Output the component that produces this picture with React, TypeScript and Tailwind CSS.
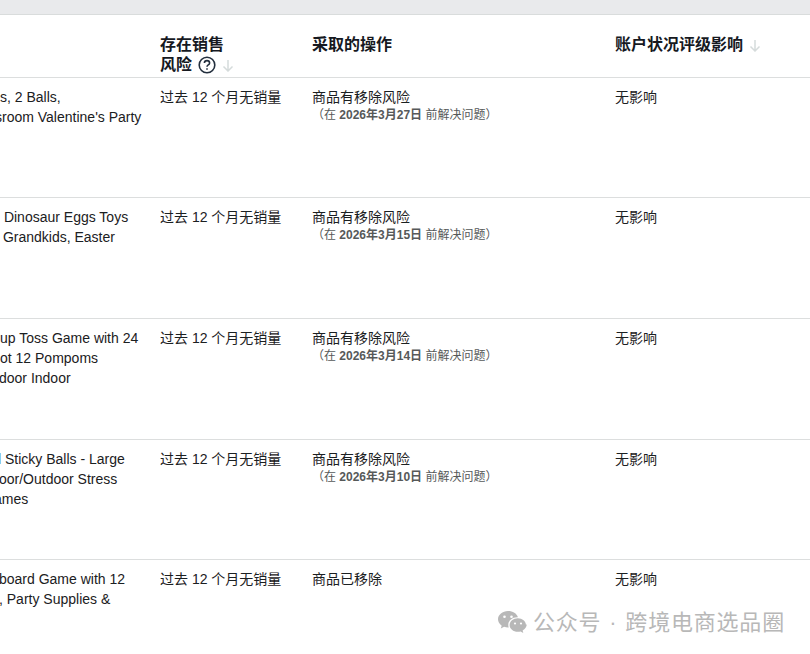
const rows = [
  {
    lines: [
      { text: "s, 2 Balls,", shift: "" },
      { text: "sroom Valentine's Party", shift: "-ml-[5px]" },
    ],
    action: "商品有移除风险",
    date: "2026年3月27日",
    h: "h-[120px]",
  },
  {
    lines: [
      { text: " Dinosaur Eggs Toys", shift: "" },
      { text: " Grandkids, Easter", shift: "-ml-[1px]" },
    ],
    action: "商品有移除风险",
    date: "2026年3月15日",
    h: "h-[121px]",
  },
  {
    lines: [
      { text: "up Toss Game with 24", shift: "" },
      { text: "ot 12 Pompoms", shift: "" },
      { text: "door Indoor", shift: "-ml-[1px]" },
    ],
    action: "商品有移除风险",
    date: "2026年3月14日",
    h: "h-[121px]",
  },
  {
    lines: [
      { text: "l Sticky Balls - Large", shift: "-ml-[2px]" },
      { text: "oor/Outdoor Stress", shift: "-ml-[1px]" },
      { text: "ames", shift: "-ml-[6px]" },
    ],
    action: "商品有移除风险",
    date: "2026年3月10日",
    h: "h-[120px]",
  },
  {
    lines: [
      { text: "board Game with 12", shift: "-ml-[1px]" },
      { text: ", Party Supplies &", shift: "-ml-[1px]" },
    ],
    action: "商品已移除",
    date: null,
    h: "h-[95px]",
  },
];

function SortArrow() {
  return (
    <svg width="12" height="13" viewBox="0 0 12 13" fill="none" stroke="#d5dbdb" strokeWidth="1.5" className="inline-block">
      <path d="M6 1v11M1.500 7.500 6 12l4.500-4.500" />
    </svg>
  );
}

function HelpIcon() {
  return (
    <svg width="18" height="18" viewBox="0 0 18 18" fill="none" stroke="#232f3e" strokeWidth="1.6" className="inline-block">
      <circle cx="9" cy="9" r="7.800" />
      <path d="M6.400 7.100c0-1.500 1.100-2.500 2.600-2.500s2.600 1 2.600 2.300c0 2-2.600 2-2.600 3.800" />
      <path d="M9 12.300v1.500" />
    </svg>
  );
}

function WeChatIcon() {
  return (
    <svg width="30" height="26" viewBox="0 0 30 26" fill="#b8b8b8">
      <path d="M11 1C5.500 1 1 4.700 1 9.300c0 2.600 1.400 4.800 3.700 6.400L3.800 18.500l3.300-1.700c1.200.4 2.500.6 3.900.6h.7c-.3-.9-.4-1.700-.4-2.500 0-4.300 4-7.700 9-7.700h.6C19.800 3.400 15.800 1 11 1z" />
      <path d="M29 15c0-3.800-3.700-6.800-8.200-6.800s-8.200 3-8.200 6.800 3.700 6.800 8.200 6.800c1 0 1.900-.1 2.800-.4l2.700 1.500-.7-2.400c2.500-1.300 4.200-3.600 4.200-6.500z" />
      <circle cx="7.500" cy="6.800" r="1.300" fill="#fff" />
      <circle cx="14.500" cy="6.800" r="1.300" fill="#fff" />
      <circle cx="18" cy="13.500" r="1.100" fill="#fff" />
      <circle cx="24" cy="13.500" r="1.100" fill="#fff" />
    </svg>
  );
}

export default function App() {
  return (
    <div className="relative w-[810px] h-[654px] overflow-hidden bg-white text-[#1b2022] text-[14px] leading-[20px] font-['Liberation_Sans','Noto_Sans_CJK_SC',sans-serif]">
      <div className="h-[15px] bg-[#e9eaec] border-b border-[#d9dcdc]" />

      <div className="flex h-[63px] border-b border-[#dcdede] pt-[20px] font-bold text-[16px] leading-[20px] text-[#16191f]">
        <div className="w-[160px] shrink-0" />
        <div className="w-[152px] shrink-0">
          <div>存在销售</div>
          <div className="flex items-center gap-[6px]">
            风险 <HelpIcon /> <SortArrow />
          </div>
        </div>
        <div className="w-[303px] shrink-0">采取的操作</div>
        <div className="flex items-center gap-[6px] h-[20px]">
          账户状况评级影响 <SortArrow />
        </div>
      </div>

      {rows.map((row, i) => (
        <div key={i} className={`flex ${row.h} border-b border-[#dcdede] pt-[9px] last:border-b-0`}>
          <div className="w-[160px] shrink-0 overflow-hidden whitespace-pre">
            {row.lines.map((l) => (
              <div key={l.text} className={l.shift}>
                {l.text}
              </div>
            ))}
          </div>
          <div className="w-[152px] shrink-0">过去 12 个月无销量</div>
          <div className="w-[303px] shrink-0">
            <div>{row.action}</div>
            {row.date && (
              <div className="text-[12px] leading-[16px] text-[#565959]">
                （在 <span className="font-bold">{row.date}</span> 前解决问题）
              </div>
            )}
          </div>
          <div>无影响</div>
        </div>
      ))}

      <div className="absolute left-[497px] top-[609px] flex items-center gap-[6px] text-[22px] leading-[28px] tracking-[0.8px] [word-spacing:1px] text-[#b8b8b8]">
        <WeChatIcon />
        <span>公众号 · 跨境电商选品圈</span>
      </div>
    </div>
  );
}
